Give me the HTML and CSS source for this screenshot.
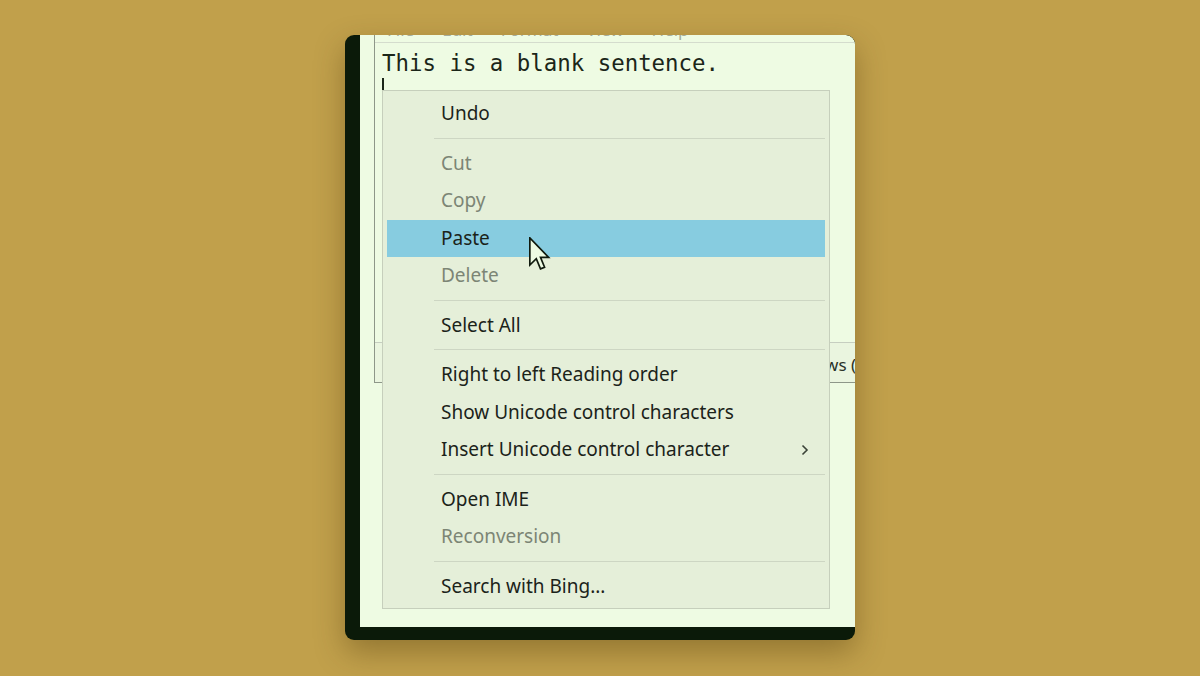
FILE: index.html
```html
<!DOCTYPE html>
<html lang="en">
<head>
<meta charset="utf-8">
<title>Notepad context menu</title>
<link rel="stylesheet" href="styles.css">
</head>
<body>
<div class="card">
  <div class="screen">
    <div class="window">
      <div class="menubar">
        <span>File</span><span>Edit</span><span>Format</span><span>View</span><span>Help</span>
      </div>
      <div class="editor">
        <div class="line">This is a blank sentence.</div>
        <div class="line"><span class="caret"></span></div>
      </div>
      <div class="statusbar"><span class="status-eol">Windows (CRLF)</span></div>
    </div>
  </div>

  <div class="menu">
    <div class="item">Undo</div>
    <div class="sep"></div>
    <div class="item disabled">Cut</div>
    <div class="item disabled">Copy</div>
    <div class="item active">Paste</div>
    <div class="item disabled">Delete</div>
    <div class="sep"></div>
    <div class="item">Select All</div>
    <div class="sep"></div>
    <div class="item">Right to left Reading order</div>
    <div class="item">Show Unicode control characters</div>
    <div class="item has-sub">Insert Unicode control character
      <svg class="chev" width="8" height="12" viewBox="0 0 8 12"><path d="M1.5 1.5 L6 6 L1.5 10.5" fill="none" stroke="#3b4338" stroke-width="1.6"/></svg>
    </div>
    <div class="sep"></div>
    <div class="item">Open IME</div>
    <div class="item disabled">Reconversion</div>
    <div class="sep"></div>
    <div class="item">Search with Bing...</div>
  </div>

  <svg class="cursor" width="22" height="34" viewBox="0 0 13 20">
    <path d="M0.5 0.5 L0.5 16.5 L4.3 12.8 L6.8 18.8 L9.2 17.8 L6.8 12 L11.6 12 Z" fill="#eefbe3" stroke="#101a0e" stroke-width="1" stroke-linejoin="miter"/>
  </svg>
</div>
</body>
</html>
```

FILE: styles.css
```css
html, body {
  margin: 0;
  padding: 0;
}
body {
  background: #c1a04b;
  width: 1200px;
  height: 676px;
  overflow: hidden;
  font-family: "Noto Sans", "Open Sans", sans-serif;
}
.card {
  position: relative;
  width: 510px;
  height: 605px;
  margin: 35px auto 0;
  background: #0b1a09;
  border-radius: 9px;
  padding: 0 0 13px 15px;
  box-sizing: border-box;
  overflow: hidden;
  box-shadow: 0 12px 30px rgba(60, 40, 0, 0.35);
}
.screen {
  height: 100%;
  background: #eefbe3;
  overflow: hidden;
  padding-left: 14px;
  border-top-right-radius: 9px;
}
.window {
  width: 640px;
  height: 348px;
  box-sizing: border-box;
  border-left: 1px solid #8e9789;
  border-bottom: 1px solid #8e9789;
  display: flex;
  flex-direction: column;
}
.menubar {
  height: 26px;
  margin-top: -18px;
  padding-top: 3px;
  box-sizing: border-box;
  border-bottom: 1px solid #d4dccd;
  display: flex;
  gap: 28px;
  padding-left: 12px;
  font-size: 17px;
  line-height: 20px;
  color: #a3ad9c;
}
.editor {
  flex: 1;
  padding: 7px 0 0 7px;
  font-family: "DejaVu Sans Mono", "Liberation Mono", monospace;
  font-size: 22.4px;
  line-height: 26px;
  color: #1b2619;
}
.line {
  height: 26px;
}
.caret {
  display: inline-block;
  width: 2px;
  height: 24px;
  margin-top: 2px;
  background: #1b2619;
  vertical-align: top;
}
.statusbar {
  height: 40px;
  box-sizing: border-box;
  border-top: 1px solid #c6cec0;
  background: #eaf5df;
  font-size: 17px;
  line-height: 44px;
  color: #2a3328;
}
.status-eol {
  margin-left: 399px;
}
.menu {
  position: absolute;
  left: 37px;
  top: 55px;
  width: 448px;
  height: 519px;
  box-sizing: border-box;
  border: 1px solid #c6cfbc;
  background: #e5efd9;
  padding: 4px 4px 3px 4px;
  font-size: 19px;
  color: #1b2319;
}
.item {
  position: relative;
  height: 37.5px;
  line-height: 37.5px;
  padding-left: 54px;
  white-space: nowrap;
}
.item.disabled {
  color: #7c8575;
}
.item.active {
  background: #87cce0;
}
.sep {
  height: 12px;
  margin-left: 47px;
  position: relative;
}
.sep::after {
  content: "";
  position: absolute;
  left: 0;
  right: 0;
  top: 5px;
  height: 1px;
  background: #cdd6c3;
}
.chev {
  position: absolute;
  right: 16px;
  top: 13px;
}
.cursor {
  position: absolute;
  left: 184px;
  top: 202px;
}
```
